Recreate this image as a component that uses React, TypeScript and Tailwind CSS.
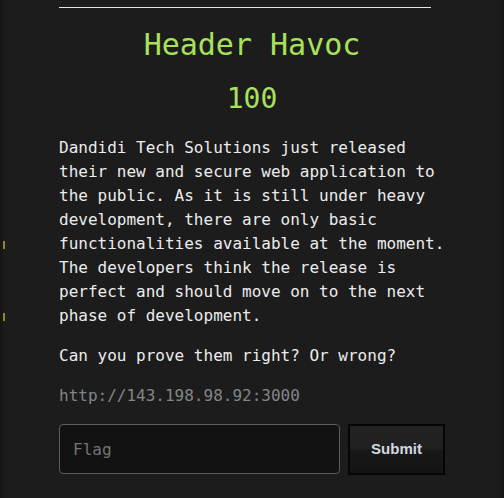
import { useState } from "react";

const mono = "font-['DejaVu_Sans_Mono',monospace]";

const ChallengeCard = () => {
  const [flag, setFlag] = useState("");

  return (
    <div className="mx-auto w-[386px] pt-[7px]">
      <div className="h-px w-[372px] bg-[#e6e6e6]" />

      <h1 className={`${mono} mt-[17px] text-center text-[30px] leading-[40px] text-[#a8e25a]`}>
        Header Havoc
      </h1>
      <h2 className={`${mono} mt-[16px] text-center text-[28px] leading-[36px] text-[#a8e25a]`}>
        100
      </h2>

      <p className={`${mono} mt-[19px] text-[16px] leading-[24px] text-[#ececec]`}>
        Dandidi Tech Solutions just released their new and secure web application to the
        public. As it is still under heavy development, there are only basic functionalities
        available at the moment. The developers think the release is perfect and should move
        on to the next phase of development.
      </p>
      <p className={`${mono} mt-[16px] text-[16px] leading-[24px] text-[#ececec]`}>
        Can you prove them right? Or wrong?
      </p>
      <p className={`${mono} mt-[16px] text-[16px] leading-[24px] text-[#858585]`}>
        http://143.198.98.92:3000
      </p>

      <div className="mt-[16px] flex gap-[8px]">
        <input
          value={flag}
          onChange={(e) => setFlag(e.target.value)}
          placeholder="Flag"
          className={`${mono} h-[50px] w-[281px] rounded-[4px] border border-[#5c5c5c] bg-[#121212] px-[13px] text-[16px] text-[#dddddd] outline-none placeholder:text-[#747474]`}
        />
        <button className="h-[51px] w-[97px] border-2 border-[#050505] bg-[linear-gradient(#232323_0%,#202020_48%,#181818_52%,#141414_100%)] font-['Liberation_Sans',Arial,sans-serif] text-[15px] font-bold text-[#d3d9e0]">
          Submit
        </button>
      </div>
    </div>
  );
};

export default function App() {
  return (
    <div className="relative min-h-[498px] overflow-hidden border-l-[3px] border-r-[3px] border-[#161616] bg-[#1c1c1c]">
      {/* clipped bits of something off to the left */}
      <div className="absolute left-0 top-[241px] h-[8px] w-[2px] bg-[#8f8a22]" />
      <div className="absolute left-0 top-[313px] h-[8px] w-[2px] bg-[#8f8a22]" />
      <ChallengeCard />
    </div>
  );
}
